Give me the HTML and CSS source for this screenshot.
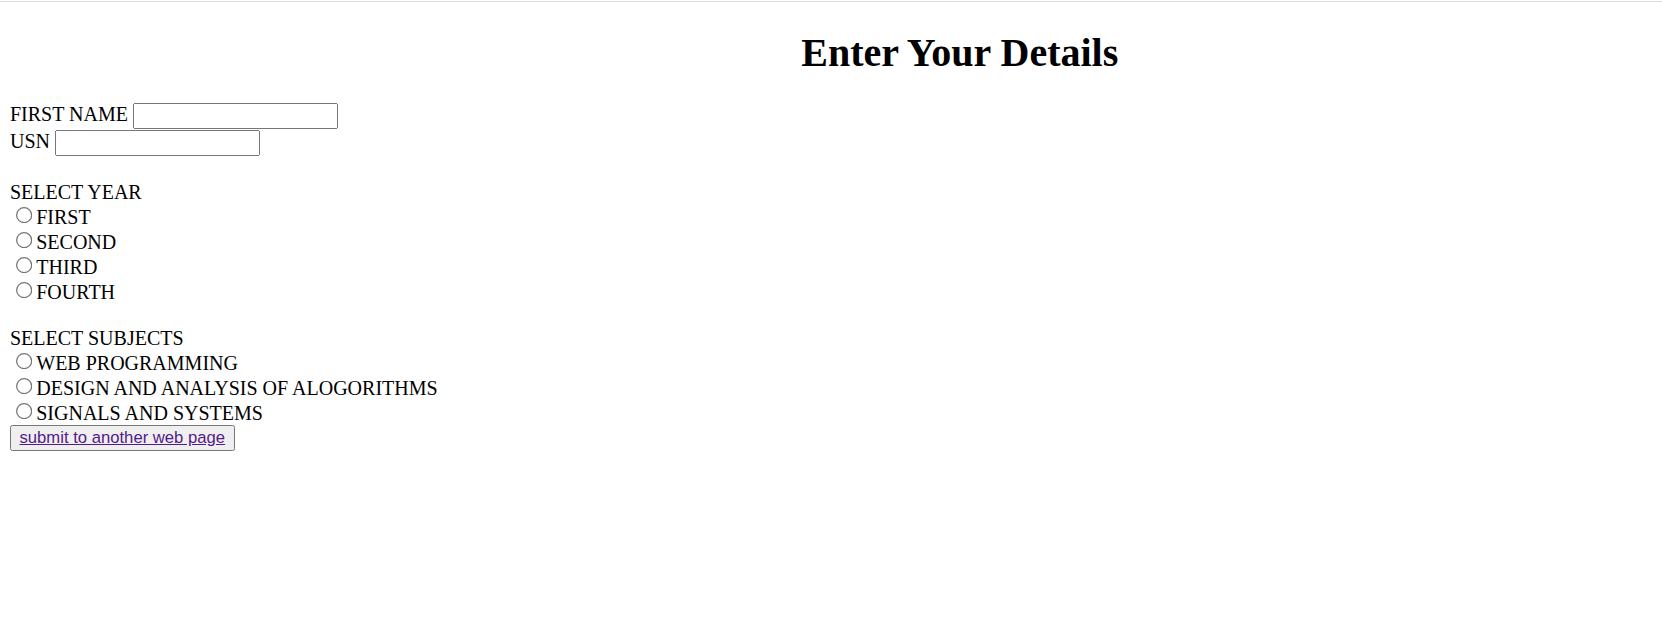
FILE: index.html
```html
<!DOCTYPE html>
<html>
<head>
<meta charset="utf-8">
<title>Enter Your Details</title>
<link rel="stylesheet" href="styles.css">
</head>
<body>
<div class="topline"></div>
<div class="page">
<h1 class="title">Enter Your Details</h1>
<form class="form">
FIRST NAME <input type="text" class="field"><br>
USN <input type="text" class="field"><br><br>
SELECT YEAR<br>
<input type="radio" name="year">FIRST<br>
<input type="radio" name="year">SECOND<br>
<input type="radio" name="year">THIRD<br>
<input type="radio" name="year">FOURTH<br><br>
SELECT SUBJECTS<br>
<input type="radio" name="sub">WEB PROGRAMMING<br>
<input type="radio" name="sub">DESIGN AND ANALYSIS OF ALOGORITHMS<br>
<input type="radio" name="sub">SIGNALS AND SYSTEMS<br>
<button type="button" class="submit"><a class="submit-link" href="#">submit to another web page</a></button>
</form>
</div>
</body>
</html>
```

FILE: styles.css
```css
html, body {
  margin: 0;
  padding: 0;
  overflow: hidden;
  background: #fff;
}
.topline {
  height: 1px;
  margin-top: 1px;
  background: #dcdcdc;
}
.page {
  zoom: 1.25;
  padding: 0 8px 8px 8px;
  font-family: "Liberation Serif", "Times New Roman", serif;
  font-size: 16px;
  color: #000;
}
.title {
  text-align: center;
  font-size: 32px;
  font-weight: bold;
  margin: 0.67em 0;
  padding-left: 206px;
}
.form {
  margin: 0;
}
.field {
  box-sizing: border-box;
  width: 164px;
  height: 21px;
  margin-bottom: 1px;
  font-family: "Liberation Sans", Arial, sans-serif;
  font-size: 13.333px;
}
.submit {
  font-family: "Liberation Sans", Arial, sans-serif;
  font-size: 13.333px;
}
.submit-link {
  color: #551a8b;
}
```
